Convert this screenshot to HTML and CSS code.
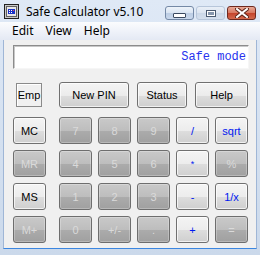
FILE: index.html
```html
<!DOCTYPE html>
<html lang="en">
<head>
  <meta charset="UTF-8">
  <title>Safe Calculator v5.10</title>
  <link rel="stylesheet" href="styles.css">
</head>
<body>
  <div class="window">
    <div class="titlebar">
      <svg class="app-icon" width="15" height="15" viewBox="0 0 15 15">
        <rect x="0.5" y="0.5" width="14" height="14" fill="#c8c8c8" stroke="#202020"/>
        <rect x="2.5" y="2.5" width="10" height="10" fill="#e8e8e8" stroke="#606060"/>
        <rect x="4" y="5" width="7" height="5" fill="#1a32c8"/>
        <rect x="5" y="6" width="1" height="1" fill="#fff"/>
        <rect x="7" y="6" width="1" height="1" fill="#fff"/>
        <rect x="9" y="6" width="1" height="1" fill="#ff4040"/>
        <rect x="5" y="8" width="1" height="1" fill="#fff"/>
        <rect x="7" y="8" width="1" height="1" fill="#fff"/>
      </svg>
      <span class="title">Safe Calculator v5.10</span>
      <div class="caption-buttons">
        <span class="cap cap-min"><i></i></span>
        <span class="cap cap-max"><i></i></span>
        <span class="cap cap-close">
          <svg width="14" height="10" viewBox="0 0 14 10">
            <path d="M2 1 L12 9 M12 1 L2 9" stroke="#5a2418" stroke-width="4" stroke-linecap="square"/>
            <path d="M2 1 L12 9 M12 1 L2 9" stroke="#fff" stroke-width="2" stroke-linecap="square"/>
          </svg>
        </span>
      </div>
    </div>

    <div class="menubar">
      <span>Edit</span>
      <span>View</span>
      <span>Help</span>
    </div>

    <div class="client">
      <div class="display">Safe mode</div>

      <div class="toprow">
        <div class="memo-box">Emp</div>
        <button class="btn pin">New PIN</button>
        <button class="btn status">Status</button>
        <button class="btn help">Help</button>
      </div>

      <div class="keys">
        <div class="mem">
          <button class="btn">MC</button>
          <button class="btn off">MR</button>
          <button class="btn">MS</button>
          <button class="btn off">M+</button>
        </div>
        <div class="pad">
          <button class="btn off">7</button>
          <button class="btn off">8</button>
          <button class="btn off">9</button>
          <button class="btn op">/</button>
          <button class="btn op">sqrt</button>

          <button class="btn off">4</button>
          <button class="btn off">5</button>
          <button class="btn off">6</button>
          <button class="btn op small">*</button>
          <button class="btn off">%</button>

          <button class="btn off">1</button>
          <button class="btn off">2</button>
          <button class="btn off">3</button>
          <button class="btn op">-</button>
          <button class="btn op">1/x</button>

          <button class="btn off">0</button>
          <button class="btn off">+/-</button>
          <button class="btn off">.</button>
          <button class="btn op">+</button>
          <button class="btn off">=</button>
        </div>
      </div>
    </div>
  </div>
</body>
</html>
```

FILE: styles.css
```css
body {
  margin: 0;
  background: #fff;
}
.window {
  width: 260px;
  height: 255px;
  box-sizing: border-box;
  background: linear-gradient(#dfe9f6, #cbd9eb);
  font-family: "Noto Sans", sans-serif;
  overflow: hidden;
}
.titlebar {
  height: 22px;
  display: flex;
  align-items: flex-start;
  padding-left: 4px;
  padding-right: 4px;
}
.app-icon {
  margin-top: 4px;
}
.title {
  margin-left: 7px;
  margin-top: 3px;
  font-size: 12px;
  color: #000;
}
.caption-buttons {
  margin-left: auto;
  display: flex;
  gap: 2px;
  margin-top: 6px;
}
.cap {
  width: 29px;
  height: 14px;
  box-sizing: border-box;
  border-radius: 3px;
  display: flex;
  align-items: center;
  justify-content: center;
}
.cap-min {
  border: 1px solid #7489a6;
  background: linear-gradient(#eef3fa 0%, #d9e4f2 50%, #bccde4 51%, #c9d8ec 100%);
}
.cap-min i {
  width: 11px;
  height: 3px;
  margin-top: 4px;
  background: #fff;
  border: 1px solid #3b4a60;
  border-radius: 1px;
}
.cap-max {
  border: 1px solid #b7c6da;
  background: linear-gradient(#e9eff7 0%, #dbe4f0 50%, #cbd8e8 51%, #d4dfed 100%);
}
.cap-max i {
  width: 8px;
  height: 5px;
  border: 1px solid #4a5a70;
  box-shadow: inset 0 0 0 1px #fff;
  background: #8696ac;
}
.cap-close {
  border: 1px solid #6f2a20;
  background: linear-gradient(#e8a997 0%, #d7775f 50%, #c4432b 51%, #d36a4e 100%);
}
.menubar {
  height: 18px;
  display: flex;
  background: linear-gradient(#fbfcfe, #e4e9f4);
  font-size: 12px;
  line-height: 18px;
  padding-left: 12px;
}
.menubar span {
  margin-right: 12px;
}
.client {
  height: 209px;
  box-sizing: border-box;
  margin: 0 3px;
  background: #f0f0f0;
  border-left: 1px solid #9fb6d6;
  border-right: 1px solid #9fb6d6;
  border-bottom: 1px solid #3b86e0;
  padding: 5px 0 0 9px;
}
.display {
  width: 236px;
  height: 24px;
  box-sizing: border-box;
  background: #fff;
  border: 1px solid;
  border-color: #8c8c8c #f6f6f6 #f6f6f6 #8c8c8c;
  box-shadow: inset 1px 1px 0 #c8c8c8;
  font-family: "Liberation Mono", monospace;
  font-size: 12px;
  color: #2632ee;
  text-align: right;
  padding-right: 2px;
  line-height: 22px;
}
.toprow {
  display: flex;
  align-items: center;
  margin-top: 13px;
  height: 26px;
}
.memo-box {
  width: 26px;
  height: 24px;
  box-sizing: border-box;
  margin-left: 3px;
  margin-right: 17px;
  border: 1px solid #8a8a8a;
  box-shadow: inset 1px 1px 0 #fff;
  font-family: "Liberation Sans", sans-serif;
  font-size: 11px;
  line-height: 22px;
  text-align: center;
}
.toprow .btn {
  height: 26px;
  margin-right: 8px;
}
.pin { width: 70px; }
.status { width: 50px; }
.help { width: 53px; }
.keys {
  display: flex;
  gap: 13px;
  margin-top: 9px;
}
.mem {
  display: grid;
  grid-template-rows: repeat(4, 27px);
  row-gap: 6px;
}
.mem .btn {
  width: 33px;
}
.pad {
  display: grid;
  grid-template-columns: repeat(5, 33px);
  grid-template-rows: repeat(4, 27px);
  gap: 6px;
}
.btn {
  box-sizing: border-box;
  padding: 0;
  margin: 0;
  border: 1px solid #707070;
  border-radius: 3px;
  background: linear-gradient(#f4f4f4 0%, #ececec 52%, #dddddd 53%, #cfcfcf 100%);
  box-shadow: inset 0 0 0 1px rgba(255, 255, 255, 0.7);
  font-family: "Liberation Sans", sans-serif;
  font-size: 11px;
  color: #000;
}
.btn.op {
  color: #0018f0;
}
.btn.small {
  font-size: 9px;
}
.btn.off {
  background: linear-gradient(#c9c9c9 0%, #bdbdbd 52%, #ababab 53%, #a0a0a0 100%);
  box-shadow: inset 0 0 0 1px rgba(255, 255, 255, 0.25);
  color: #dadada;
  border-color: #6e6e6e;
}
```
